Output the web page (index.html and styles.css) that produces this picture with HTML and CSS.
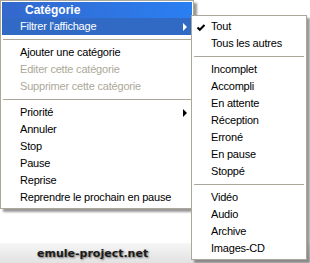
FILE: index.html
```html
<!DOCTYPE html>
<html lang="fr">
<head>
  <meta charset="utf-8">
  <title>Catégorie</title>
  <link rel="stylesheet" href="styles.css">
</head>
<body>
  <div class="screen">
    <div class="menu main-menu">
      <div class="menu-title">Catégorie</div>
      <div class="item hot">Filtrer l'affichage<span class="arrow"></span></div>
      <div class="sep"></div>
      <div class="item">Ajouter une catégorie</div>
      <div class="item off">Editer cette catégorie</div>
      <div class="item off">Supprimer cette catégorie</div>
      <div class="sep"></div>
      <div class="item">Priorité<span class="arrow"></span></div>
      <div class="item">Annuler</div>
      <div class="item">Stop</div>
      <div class="item">Pause</div>
      <div class="item">Reprise</div>
      <div class="item">Reprendre le prochain en pause</div>
    </div>

    <div class="banner"><span>emule-project.net</span></div>

    <!-- sous-menu ouvert par "Filtrer l'affichage" -->
    <div class="menu sub-menu">
      <div class="item">
        <svg class="check" width="8" height="8" viewBox="0 0 8 8"><path d="M0.5 3.5 L2.8 5.8 L7.5 1" fill="none" stroke="#000" stroke-width="2"/></svg>Tout
      </div>
      <div class="item">Tous les autres</div>
      <div class="sep"></div>
      <div class="item">Incomplet</div>
      <div class="item">Accompli</div>
      <div class="item">En attente</div>
      <div class="item">Réception</div>
      <div class="item">Erroné</div>
      <div class="item">En pause</div>
      <div class="item">Stoppé</div>
      <div class="sep"></div>
      <div class="item">Vidéo</div>
      <div class="item">Audio</div>
      <div class="item">Archive</div>
      <div class="item">Images-CD</div>
    </div>
  </div>
</body>
</html>
```

FILE: styles.css
```css
body {
  margin: 0;
  background: #fff;
  font-family: "Liberation Sans", Arial, sans-serif;
  font-size: 11px;
}

.screen {
  position: relative;
  width: 310px;
  height: 263px;
  overflow: hidden;
  display: flex;
  flex-direction: column;
}

.menu {
  background: #fff;
  border: 1px solid #aca899;
  box-shadow: 3px 3px 2px rgba(0, 0, 0, 0.4);
  box-sizing: border-box;
}

.main-menu {
  width: 194px;
  padding: 1px 1px 2px;
}

.sub-menu {
  position: absolute;
  left: 191px;
  top: 15px;
  width: 116px;
  padding: 2px 1px;
}

.menu-title {
  height: 16px;
  line-height: 16px;
  padding-left: 23px;
  color: #fff;
  font-weight: bold;
  font-size: 12px;
  background: linear-gradient(to right, #3468cc, #2a7ff2);
}

.item {
  position: relative;
  height: 17px;
  line-height: 17px;
  padding-left: 18px;
  color: #000;
  letter-spacing: -0.2px;
  white-space: nowrap;
}

.item.hot {
  background: #316ac5;
  color: #fff;
}

.item.off {
  color: #aca899;
}

.sep {
  height: 9px;
  display: flex;
  align-items: center;
  padding: 0 1px;
}

.sep::before {
  content: "";
  flex: 1;
  height: 1px;
  background: #aca899;
}

.arrow {
  position: absolute;
  right: 5px;
  top: 5px;
  border-left: 4px solid #000;
  border-top: 4px solid transparent;
  border-bottom: 4px solid transparent;
}

.hot .arrow {
  border-left-color: #fff;
}

.check {
  position: absolute;
  left: 4px;
  top: 6px;
}

.banner {
  margin-top: auto;
  height: 20px;
  line-height: 20px;
  background: linear-gradient(#f6f6f6, #e2e2e2);
  padding-left: 37px;
}

.banner span {
  font-family: "DejaVu Sans", Verdana, sans-serif;
  font-weight: bold;
  font-size: 11px;
  color: #1a1a1a;
  text-shadow: 1px 1px 2px rgba(0, 0, 0, 0.5);
}
```
